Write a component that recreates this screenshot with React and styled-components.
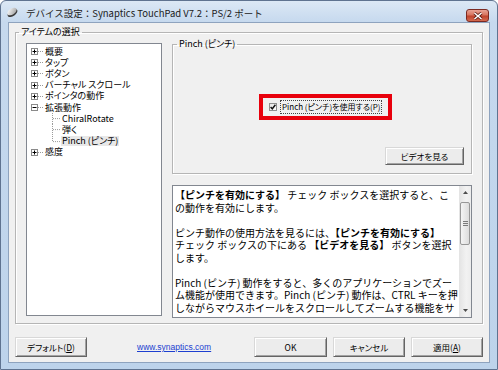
import React from 'react';
import styled, { createGlobalStyle } from 'styled-components';

const uiFont = `"Noto Sans CJK JP", "Noto Sans", sans-serif`;

const GlobalStyle = createGlobalStyle`
  html, body {
    margin: 0;
    padding: 0;
    background: #ffffff;
  }
  body {
    font-family: ${uiFont};
  }
`;

const Window = styled.div`
  width: 498px;
  height: 370px;
  box-sizing: border-box;
  display: flex;
  flex-direction: column;
  border: 1px solid #5f7390;
  border-radius: 6px 6px 0 0;
  background: linear-gradient(180deg, #dce8f5 0px, #c6d9ee 21px, #bdd3eb 100%);
  padding: 0 7px 6px 7px;
`;

const TitleBar = styled.div`
  height: 21px;
  margin: 0 -7px;
  padding: 0 8px 0 4px;
  display: flex;
  align-items: center;
`;

const TitleText = styled.div`
  flex: 1;
  margin-left: 7px;
  font-size: 9.5px;
  color: #1b1b1b;
  white-space: nowrap;
  margin-top: 2px;
`;

const CloseButton = styled.div`
  width: 23px;
  height: 13px;
  box-sizing: border-box;
  align-self: flex-start;
  margin-top: 8px;
  border: 1px solid #7b2a22;
  border-radius: 3px;
  background: linear-gradient(180deg, #e9a294 0%, #d8755f 45%, #c0432c 55%, #d46a4f 100%);
  display: flex;
  align-items: center;
  justify-content: center;
`;

const Client = styled.div`
  flex: 1;
  display: flex;
  flex-direction: column;
  background: #f0f0f0;
  border: 1px solid #8ea3be;
  font-size: 9px;
  color: #000;
  font-feature-settings: "palt";
`;

const Group = styled.fieldset`
  margin: 0;
  padding: ${p => p.$pad};
  border: 1px solid #b5b5b5;
  box-shadow: 1px 1px 0 #ffffff, inset 1px 1px 0 #ffffff;
  box-sizing: border-box;
  min-width: 0;
  height: ${p => p.$h}px;
  display: flex;
  flex-direction: ${p => p.$dir || 'row'};
`;

const Caption = styled.legend`
  margin-left: ${p => p.$shift}px;
  padding: 0 2px;
  font-size: 9px;
  line-height: 12px;
  color: #000;
`;

const OuterGroup = styled(Group)`
  margin: 3px 6px 0 6px;
  gap: 10px;
`;

const Tree = styled.div`
  width: 137px;
  height: 273px;
  margin-top: 5px;
  box-sizing: border-box;
  border: 1px solid #828790;
  background: #ffffff;
  padding-top: 2px;
`;

const TreeRow = styled.div`
  height: 11.2px;
  display: flex;
  align-items: center;
  padding-left: ${p => (p.$child ? 25 : 4)}px;
  white-space: nowrap;
`;

const TreeLabel = styled.span`
  margin-left: 1px;
  line-height: 10px;
  padding: 0 1px;
  background: ${p => (p.$selected ? '#e8e8e8' : 'transparent')};
`;

const RightColumn = styled.div`
  width: 300px;
  display: flex;
  flex-direction: column;
`;

const PinchGroup = styled(Group)`
  align-items: center;
`;

const Highlight = styled.div`
  margin-top: 44px;
  margin-left: 7px;
  width: 133px;
  height: 26px;
  box-sizing: border-box;
  border: 4px solid #e8000c;
  display: flex;
  align-items: center;
  padding-left: 6px;
  gap: 4px;
`;

const CheckBox = styled.span`
  width: 8px;
  height: 8px;
  flex: none;
  box-sizing: border-box;
  border: 1px solid #8e8f8f;
  background: linear-gradient(135deg, #e6e6e6, #ffffff);
  display: flex;
  align-items: center;
  justify-content: center;
`;

const FocusLabel = styled.span`
  outline: 1px dotted #444;
  padding: 0 1px;
  font-size: 8px;
  line-height: 12px;
  white-space: nowrap;
`;

const Button = styled.div`
  width: ${p => p.$w}px;
  height: ${p => p.$h}px;
  box-sizing: border-box;
  display: flex;
  align-items: center;
  justify-content: center;
  border: 1px solid;
  border-color: #d8d8d8 #646464 #646464 #d8d8d8;
  box-shadow: inset 1px 1px 0 #ffffff, inset -1px -1px 0 #a3a3a3;
  background: #ececec;
  font-size: 8.5px;
  color: #000;
  white-space: nowrap;
`;

const VideoButton = styled(Button)`
  margin-top: 27px;
  align-self: flex-end;
`;

const DescBox = styled.div`
  margin-top: 11px;
  height: 133px;
  box-sizing: border-box;
  border: 1px solid #828790;
  background: #ffffff;
  display: flex;
`;

const DescText = styled.div`
  flex: 1;
  padding: 3px 2px;
  font-size: 10px;
  line-height: 12.5px;
  font-feature-settings: normal;
  color: #000;
  white-space: nowrap;
  overflow: hidden;
`;

const DescLine = styled.div`
  height: 12.5px;
  line-height: 12.5px;
`;

const Bold = styled.b`
  font-weight: 700;
`;

const ScrollBar = styled.div`
  width: 12px;
  display: flex;
  flex-direction: column;
  align-items: center;
  background: linear-gradient(90deg, #e3e3e3, #f2f2f2 60%, #ececec);
`;

const ArrowCell = styled.div`
  height: 13px;
  width: 100%;
  display: flex;
  align-items: center;
  justify-content: center;
`;

const Thumb = styled.div`
  margin-top: 3px;
  width: 10px;
  height: 43px;
  box-sizing: border-box;
  border: 1px solid #979797;
  border-radius: 2px;
  background: linear-gradient(90deg, #f4f4f4, #dcdcdc);
  display: flex;
  align-items: center;
  justify-content: center;
`;

const Spacer = styled.div`
  flex: 1;
`;

const ButtonRow = styled.div`
  margin-top: 13px;
  padding: 0 6px;
  display: flex;
  align-items: center;
  gap: 6px;
`;

const Link = styled.span`
  margin-left: 44px;
  font-family: "Liberation Sans", Arial, sans-serif;
  font-size: 8.5px;
  color: #1d3fd0;
  text-decoration: underline;
`;

const AppIcon = () => (
  <svg width="14" height="13" viewBox="0 0 14 13">
    <defs>
      <linearGradient id="ic" x1="0" y1="0" x2="1" y2="1">
        <stop offset="0" stopColor="#ffffff" />
        <stop offset="1" stopColor="#9a9a9a" />
      </linearGradient>
    </defs>
    <ellipse cx="7.5" cy="8" rx="5.5" ry="3.2" fill="#3a3a3a" transform="rotate(-35 7.5 8)" />
    <ellipse cx="7" cy="6.5" rx="5.2" ry="3" fill="url(#ic)" transform="rotate(-35 7 6.5)" />
  </svg>
);

const CloseIcon = () => (
  <svg width="10" height="8" viewBox="0 0 10 8">
    <path d="M1.5 1 L8.5 7 M8.5 1 L1.5 7" stroke="#5a1a12" strokeWidth="3" />
    <path d="M1.5 1 L8.5 7 M8.5 1 L1.5 7" stroke="#ffffff" strokeWidth="1.6" />
  </svg>
);

const Expander = ({ open }) => (
  <svg width="7" height="7" viewBox="0 0 7 7">
    <rect x="0.5" y="0.5" width="6" height="6" fill="#ffffff" stroke="#8a8a8a" />
    <path d="M1.5 3.5 H5.5" stroke="#000" />
    {!open && <path d="M3.5 1.5 V5.5" stroke="#000" />}
  </svg>
);

const Stub = () => (
  <svg width="5" height="7" viewBox="0 0 5 7">
    <path d="M0 3.5 H5" stroke="#9a9a9a" strokeDasharray="1 1" />
  </svg>
);

const Connector = ({ last }) => (
  <svg width="8" height="11.2" viewBox="0 0 8 11.2">
    <path d={`M0.5 0 V${last ? 5.6 : 11.2}`} stroke="#9a9a9a" strokeDasharray="1 1" />
    <path d="M1 5.6 H8" stroke="#9a9a9a" strokeDasharray="1 1" />
  </svg>
);

const Check = () => (
  <svg width="6" height="6" viewBox="0 0 6 6">
    <path d="M0.6 3 L2.3 4.8 L5.4 0.8" stroke="#111" strokeWidth="1.4" fill="none" />
  </svg>
);

const Arrow = ({ up }) => (
  <svg width="5" height="3" viewBox="0 0 5 3">
    <path d={up ? 'M0 3 L2.5 0 L5 3 Z' : 'M0 0 L2.5 3 L5 0 Z'} fill="#4d4d4d" />
  </svg>
);

const Grip = () => (
  <svg width="5" height="5" viewBox="0 0 5 5">
    <path d="M0 0.5 H5 M0 2.5 H5 M0 4.5 H5" stroke="#7a7a7a" />
  </svg>
);

const treeItems = [
  { label: '概要' },
  { label: 'タップ' },
  { label: 'ボタン' },
  { label: 'バーチャル スクロール' },
  { label: 'ポインタの動作' },
  { label: '拡張動作', open: true },
  { label: 'ChiralRotate', child: true },
  { label: '弾く', child: true },
  { label: 'Pinch (ピンチ)', child: true, last: true, selected: true },
  { label: '感度' },
];

const App = () => (
  <>
    <GlobalStyle />
    <Window>
      <TitleBar>
        <AppIcon />
        <TitleText>デバイス設定：Synaptics TouchPad V7.2：PS/2 ポート</TitleText>
        <CloseButton>
          <CloseIcon />
        </CloseButton>
      </TitleBar>
      <Client>
        <OuterGroup $h={298} $pad="0 10px 6px 10px">
          <Caption $shift={-7}>アイテムの選択</Caption>
          <Tree>
            {treeItems.map(item => (
              <TreeRow key={item.label} $child={item.child}>
                {item.child ? (
                  <Connector last={item.last} />
                ) : (
                  <>
                    <Expander open={item.open} />
                    <Stub />
                  </>
                )}
                <TreeLabel $selected={item.selected}>{item.label}</TreeLabel>
              </TreeRow>
            ))}
          </Tree>
          <RightColumn>
            <PinchGroup $h={136} $dir="column" $pad="0 7px 7px 7px">
              <Caption $shift={-3}>Pinch (ピンチ)</Caption>
              <Highlight>
                <CheckBox>
                  <Check />
                </CheckBox>
                <FocusLabel>Pinch (ピンチ)を使用する(P)</FocusLabel>
              </Highlight>
              <VideoButton $w={79} $h={18}>ビデオを見る</VideoButton>
            </PinchGroup>
            <DescBox>
              <DescText>
                <DescLine>
                  <Bold>【ピンチを有効にする】</Bold> チェック ボックスを選択すると、こ
                </DescLine>
                <DescLine>の動作を有効にします。</DescLine>
                <DescLine />
                <DescLine>
                  ピンチ動作の使用方法を見るには、<Bold>【ピンチを有効にする】</Bold>
                </DescLine>
                <DescLine>
                  チェック ボックスの下にある <Bold>【ビデオを見る】</Bold> ボタンを選択
                </DescLine>
                <DescLine>します。</DescLine>
                <DescLine />
                <DescLine>Pinch (ピンチ) 動作をすると、多くのアプリケーションでズー</DescLine>
                <DescLine>ム機能が使用できます。Pinch (ピンチ) 動作は、CTRL キーを押</DescLine>
                <DescLine>しながらマウスホイールをスクロールしてズームする機能をサ</DescLine>
              </DescText>
              <ScrollBar>
                <ArrowCell>
                  <Arrow up />
                </ArrowCell>
                <Thumb>
                  <Grip />
                </Thumb>
                <Spacer />
                <ArrowCell>
                  <Arrow />
                </ArrowCell>
              </ScrollBar>
            </DescBox>
          </RightColumn>
        </OuterGroup>
        <ButtonRow>
          <Button $w={72} $h={20}>デフォルト(<u>D</u>)</Button>
          <Link>www.synaptics.com</Link>
          <Spacer />
          <Button $w={73} $h={20}>OK</Button>
          <Button $w={72} $h={20}>キャンセル</Button>
          <Button $w={72} $h={20}>適用(<u>A</u>)</Button>
        </ButtonRow>
      </Client>
    </Window>
  </>
);

export default App;
